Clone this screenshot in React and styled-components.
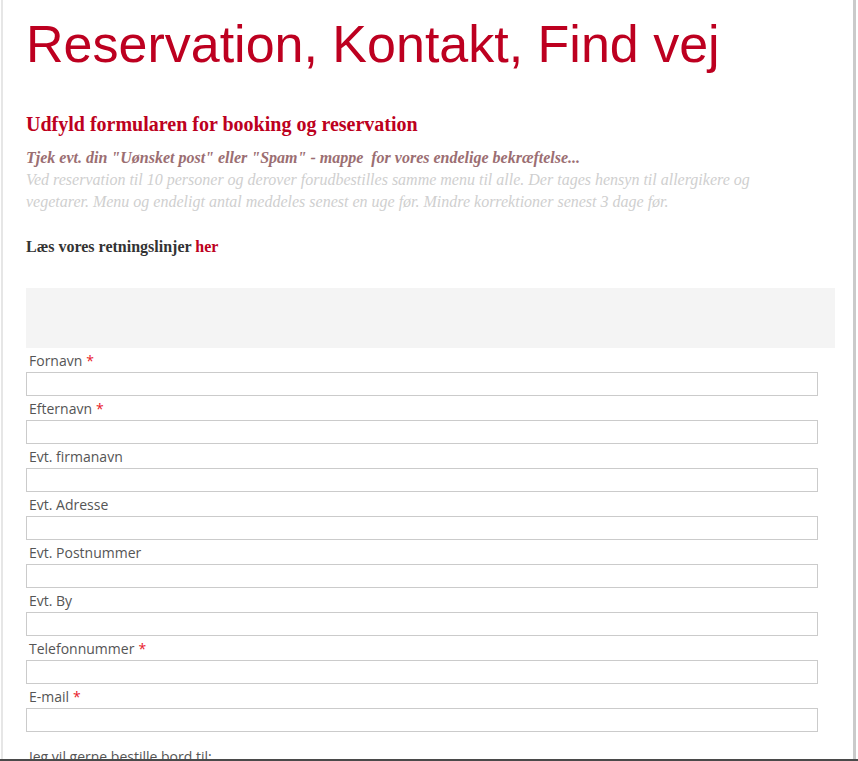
import React from 'react';
import styled, {createGlobalStyle} from "styled-components";

const GlobalStyle = createGlobalStyle`
  html, body {
    margin: 0;
    padding: 0;
    background: #fff;
  }
  * {
    box-sizing: border-box;
  }
`;

const fields = [
    {label: 'Fornavn', required: true},
    {label: 'Efternavn', required: true},
    {label: 'Evt. firmanavn'},
    {label: 'Evt. Adresse'},
    {label: 'Evt. Postnummer'},
    {label: 'Evt. By'},
    {label: 'Telefonnummer', required: true},
    {label: 'E-mail', required: true},
];

function Field({label, required}) {
    return (
        <FieldRow>
            <Label>
                {label}
                {required && <Required>*</Required>}
            </Label>
            <Input type="text"/>
        </FieldRow>
    );
}

function App() {
    return (
        <>
            <GlobalStyle/>
            <Frame>
                <Page>
                    <Title>Reservation, Kontakt, Find vej</Title>
                    <Intro>
                        <h2>Udfyld formularen for booking og reservation</h2>
                        <Notice>Tjek evt. din "Uønsket post" eller "Spam" - mappe&nbsp; for vores endelige bekræftelse...</Notice>
                        <Muted>
                            Ved reservation til 10 personer og derover forudbestilles samme menu til alle. Der tages hensyn til allergikere og
                            vegetarer. Menu og endeligt antal meddeles senest en uge før. Mindre korrektioner senest 3 dage før.
                        </Muted>
                        <Guidelines>Læs vores retningslinjer <a href="#">her</a></Guidelines>
                    </Intro>
                    <FormHead/>
                    <Form>
                        {fields.map((f) => (
                            <Field key={f.label} {...f}/>
                        ))}
                        <SectionLabel>Jeg vil gerne bestille bord til:</SectionLabel>
                    </Form>
                </Page>
            </Frame>
        </>
    );
}

const Frame = styled.div`
  height: 761px;
  overflow: hidden;
  border-bottom: 2px solid #4a4a4a;
  padding-left: 1px;
`;

const Page = styled.div`
  width: 855px;
  min-height: 100%;
  border-left: 2px solid #e6e6e6;
  border-right: 3px solid #cacaca;
  padding: 12px 0 0 23px;
`;

const Title = styled.h1`
  margin: 0;
  font-family: "Liberation Sans", Arial, sans-serif;
  font-weight: 400;
  font-size: 52px;
  line-height: 64px;
  color: #bd0020;
`;

const Intro = styled.div`
  margin-top: 36px;
  width: 760px;
  font-family: "Liberation Serif", "Times New Roman", serif;
  h2 {
    margin: 0;
    font-size: 20px;
    line-height: 24px;
    font-weight: 700;
    color: #bd0020;
  }
`;

const Notice = styled.p`
  margin: 11px 0 0;
  font-size: 16px;
  line-height: 22px;
  font-weight: 700;
  font-style: italic;
  color: #9b6e72;
`;

const Muted = styled.p`
  margin: 0;
  font-size: 16px;
  line-height: 22px;
  font-style: italic;
  color: #cfcfcf;
`;

const Guidelines = styled.p`
  margin: 23px 0 0;
  font-size: 16px;
  line-height: 22px;
  font-weight: 700;
  color: #333;
  a {
    color: #bd0020;
    text-decoration: none;
  }
`;

const FormHead = styled.div`
  margin-top: 30px;
  width: 809px;
  height: 60px;
  background: #f4f4f4;
`;

const Form = styled.form`
  width: 792px;
  font-family: "Open Sans", "Liberation Sans", sans-serif;
`;

const FieldRow = styled.div`
  display: flex;
  flex-direction: column;
`;

const Label = styled.label`
  height: 24px;
  padding: 3px 0 0 3px;
  font-size: 14px;
  line-height: 20px;
  color: #555;
`;

const Required = styled.span`
  margin-left: 4px;
  color: #e8202a;
`;

const Input = styled.input`
  display: block;
  width: 100%;
  height: 24px;
  margin: 0;
  border: 1px solid #cbcbcb;
  background: #fff;
  outline: none;
`;

const SectionLabel = styled.div`
  margin-top: 15px;
  padding-left: 3px;
  font-size: 14px;
  line-height: 20px;
  color: #555;
`;

export default App;
